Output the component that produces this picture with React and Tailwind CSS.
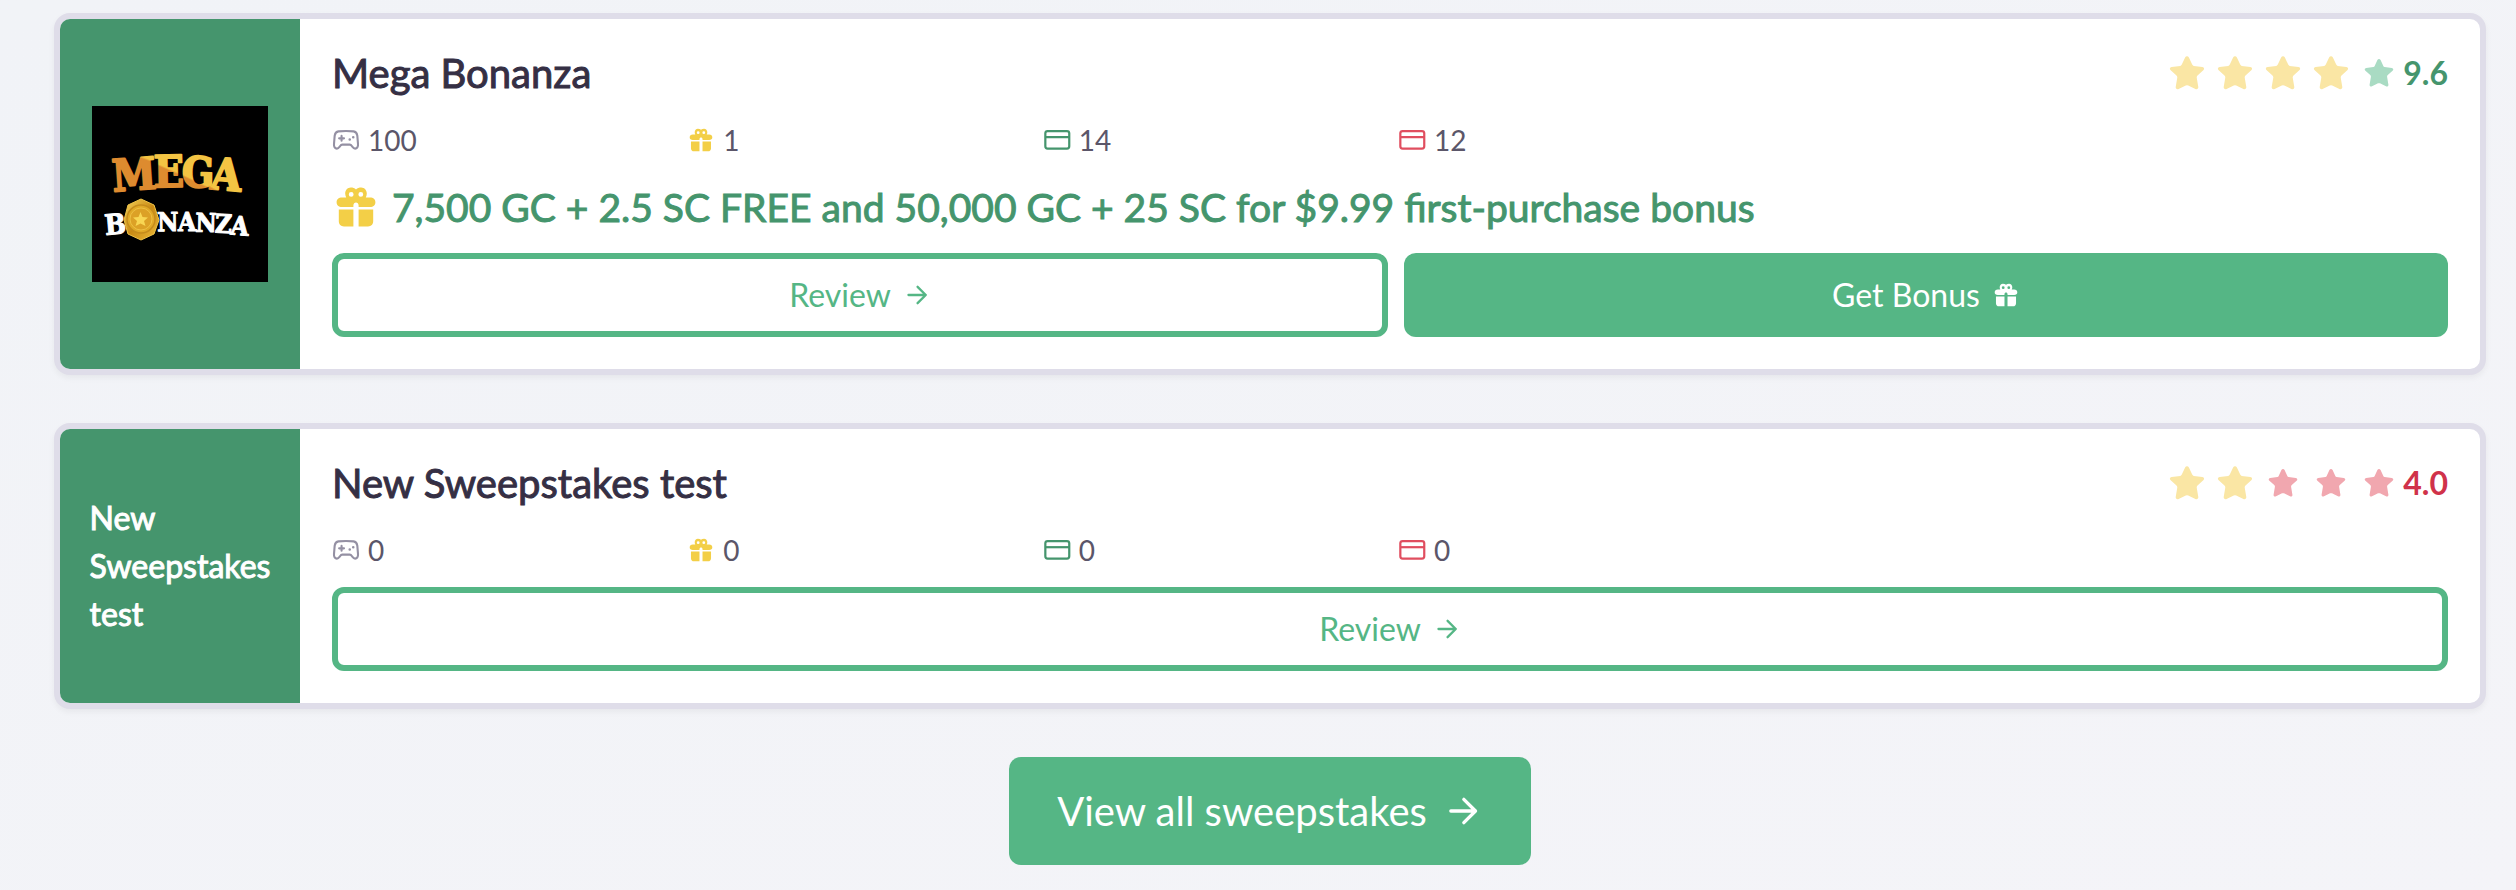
function Gift({ className }) {
  return (
    <svg viewBox="0 0 24 24" className={className} fill="currentColor" aria-hidden="true">
      <path
        fillRule="evenodd"
        d="M12 3.2C11.3 2.6 10.4 2.3 9.4 2.3C7.7 2.3 6.6 3.7 6.6 5.3C6.6 6 6.8 6.6 7.1 7.2H5C3.3 7.2 2.3 8.2 2.3 9.6C2.3 11 3.3 12 5 12H10.7V11.2C10.7 10.4 11.3 9.8 12 9.8C12.7 9.8 13.3 10.4 13.3 11.2V12H19C20.7 12 21.7 11 21.7 9.6C21.7 8.2 20.7 7.2 19 7.2H16.9C17.2 6.6 17.4 6 17.4 5.3C17.4 3.7 16.3 2.3 14.6 2.3C13.6 2.3 12.7 2.6 12 3.2ZM9.6 4.5A1.2 1.2 0 1 1 9.6 6.9A1.2 1.2 0 1 1 9.6 4.5ZM14.4 4.5A1.2 1.2 0 1 1 14.4 6.9A1.2 1.2 0 1 1 14.4 4.5Z"
      />
      <path d="M3.4 13.2H10.7V21.7H6C4.4 21.7 3.4 20.7 3.4 19ZM13.3 13.2H20.6V19C20.6 20.7 19.6 21.7 18 21.7H13.3Z" />
    </svg>
  );
}

function Gamepad({ className }) {
  return (
    <svg viewBox="0 0 24 24" className={className} fill="none" stroke="currentColor" strokeWidth="1.8" strokeLinecap="round" strokeLinejoin="round" aria-hidden="true">
      <path d="M5.5 4.6Q12 4 18.5 4.6C20.5 4.9 21.3 6 21.7 8.3L22.3 15.5C22.5 18 21.4 19.4 19.8 19.4C17.6 19.4 17.2 16 15.2 16H8.8C6.8 16 6.4 19.4 4.2 19.4C2.6 19.4 1.5 18 1.7 15.5L2.3 8.3C2.7 6 3.5 4.9 5.5 4.6Z" />
      <path d="M8.2 8.5V12.7M6.1 10.6H10.3" />
      <path d="M15.2 11.6H15.21M18.2 9.6H18.21" strokeWidth="2.2" />
    </svg>
  );
}

function Card({ className }) {
  return (
    <svg viewBox="0 0 24 24" className={className} fill="none" stroke="currentColor" strokeWidth="1.9" aria-hidden="true">
      <rect x="2" y="4.3" width="20.5" height="15" rx="2" />
      <path d="M2 9.6H22.5" />
    </svg>
  );
}

function Arrow({ className }) {
  return (
    <svg viewBox="0 0 24 24" className={className} fill="none" stroke="currentColor" strokeWidth="2" strokeLinecap="round" strokeLinejoin="round" aria-hidden="true">
      <path d="M4.7 12H19.5M12.5 5L19.5 12L12.5 19" />
    </svg>
  );
}

function Star({ className }) {
  return (
    <svg viewBox="0 0 36 36" className={className} fill="currentColor" aria-hidden="true">
      <path d="M16.1 2.4C16.9 0.8 19.1 0.8 19.9 2.4L23.2 9.6Q23.6 10.6 24.7 10.9L33.4 12C35.3 12.3 35.7 14 34.3 15.3L28.5 20.4Q27.6 21.3 27.7 22.6L29.3 32C29.5 33.7 28 34.7 26.4 34L19.2 30.4Q18 29.9 16.8 30.4L9.6 34C8 34.7 6.5 33.7 6.7 32L8.3 22.6Q8.4 21.3 7.5 20.4L1.7 15.3C0.3 14 0.7 12.3 2.6 12L11.3 10.9Q12.4 10.6 12.8 9.6Z" />
    </svg>
  );
}

function Rating({ filled, score, restClass, scoreClass }) {
  return (
    <div className="flex h-11 shrink-0 items-center" aria-label={`Rated ${score}`}>
      {[0, 1, 2, 3, 4].map((i) => (
        <span key={i} className="flex w-12 items-center justify-center">
          <Star className={i < filled ? "size-9 text-[#fae6a4]" : `size-[30px] ${restClass}`} />
        </span>
      ))}
      <span className={`text-[32px] leading-[44px] font-bold ${scoreClass}`}>{score}</span>
    </div>
  );
}

const MEGA = [
  ["M", 43, 84, -4, 44],
  ["E", 77, 81, -1, 44],
  ["G", 106, 81, 1, 42],
  ["A", 133, 84, 5, 44],
];

const BONANZA = [
  ["B", 24, 128, -5, 28],
  ["N", 76, 125, -1, 26],
  ["A", 95, 125, 0, 26],
  ["N", 114, 126, 1, 26],
  ["Z", 131, 127, 3, 26],
  ["A", 147, 129, 5, 26],
];

function Logo() {
  return (
    <svg viewBox="0 0 176 176" className="size-44" role="img" aria-label="Mega Bonanza">
      <defs>
        <linearGradient id="gold" gradientUnits="userSpaceOnUse" x1="90" y1="46" x2="70" y2="90">
          <stop offset="0.42" stopColor="#f3c443" />
          <stop offset="0.46" stopColor="#dd8b2f" />
        </linearGradient>
        <linearGradient id="coin" x1="0" y1="0" x2="1" y2="1">
          <stop offset="0" stopColor="#f6d35a" />
          <stop offset="0.5" stopColor="#c98a14" />
          <stop offset="1" stopColor="#eebd3b" />
        </linearGradient>
      </defs>
      <rect width="176" height="176" fill="#000" />
      <g fontFamily="'DejaVu Serif Condensed', 'DejaVu Serif', serif" fontWeight="700" textAnchor="middle" strokeLinejoin="round">
        {MEGA.map(([ch, x, y, r, size]) => (
          <text key={ch} x={x} y={y} fontSize={size} transform={`rotate(${r} ${x} ${y})`} fill="url(#gold)" stroke="url(#gold)" strokeWidth="2">
            {ch}
          </text>
        ))}
        {BONANZA.map(([ch, x, y, r, size]) => (
          <text key={x} x={x} y={y} fontSize={size} transform={`rotate(${r} ${x} ${y})`} fill="#fff" stroke="#fff" strokeWidth="1">
            {ch}
          </text>
        ))}
      </g>
      <path d="M49 93L62 99L67 114L62 128L49 134L36 128L32 114L36 99Z" fill="url(#coin)" stroke="#f0c548" strokeWidth="1" />
      <circle cx="49" cy="113" r="14" fill="#e0a927" stroke="#c58c1c" strokeWidth="1.5" />
      <circle cx="49" cy="113" r="11" fill="#dca126" stroke="#f1c64b" strokeWidth="0.8" />
      <path d="M48.5 106L50.5 111L56 111.5L52 115L53.5 120L48.5 117.5L43.5 120L45 115L41 111.5L46.5 111Z" fill="#f8d653" />
    </svg>
  );
}

const STATS = [
  [Gamepad, "text-[#9490a3]", "Games"],
  [Gift, "text-[#f3cf47]", "Bonuses"],
  [Card, "text-[#45956d]", "Deposit methods"],
  [Card, "text-[#e04e5f]", "Withdrawal methods"],
];

function ReviewLink() {
  return (
    <a href="#review" className="flex flex-1 items-center justify-center gap-3 rounded-xl border-6 border-[#55b685] px-6 py-3 text-[32px] leading-[48px] text-[#55b685]">
      Review
      <Arrow className="size-7" />
    </a>
  );
}

function Casino({ name, brand, stats, bonus, rating }) {
  return (
    <article className="flex overflow-hidden rounded-2xl border-6 border-[#dfdde9] bg-white shadow-[0_3px_6px_rgba(0,0,0,0.05)]">
      <div className="flex w-60 shrink-0 items-center justify-center bg-[#45956d]">{brand}</div>
      <div className="min-w-0 flex-1 p-8">
        <div className="mb-6 flex items-center justify-between">
          <h2 className="text-[40px] leading-[44px] text-[#352f44] [-webkit-text-stroke:1px_currentColor]">{name}</h2>
          <Rating {...rating} />
        </div>
        <ul className="mb-4 grid grid-cols-6 gap-4">
          {STATS.map(([Icon, color, label], i) => (
            <li key={label} className="flex items-center gap-2 text-[28px] leading-[42px] text-[#5b5669]" aria-label={label}>
              <Icon className={`size-7 ${color}`} />
              {stats[i]}
            </li>
          ))}
        </ul>
        {bonus && (
          <p className="mb-4 flex items-center gap-3 text-[39px] leading-[60px] text-[#45956d] [-webkit-text-stroke:1px_currentColor]">
            <Gift className="size-12 shrink-0 text-[#f3cf47]" />
            {bonus}
          </p>
        )}
        <div className="flex gap-4">
          <ReviewLink />
          {bonus && (
            <a href="#bonus" className="flex flex-1 items-center justify-center gap-3 rounded-xl bg-[#55b685] px-6 py-3 text-[32px] leading-[48px] text-white">
              Get Bonus
              <Gift className="size-7" />
            </a>
          )}
        </div>
      </div>
    </article>
  );
}

export default function App() {
  return (
    <main className="flex min-h-screen flex-col gap-12 bg-linear-to-br from-[#f1f3f7] to-[#f4f4f8] pt-[13px] pr-[30px] pb-6 pl-[54px] font-['Lato',sans-serif]">
      <Casino
        name="Mega Bonanza"
        brand={<Logo />}
        stats={[100, 1, 14, 12]}
        bonus="7,500 GC + 2.5 SC FREE and 50,000 GC + 25 SC for $9.99 first-purchase bonus"
        rating={{ filled: 4, score: "9.6", restClass: "text-[#a9dbc3]", scoreClass: "text-[#45956d]" }}
      />
      <Casino
        name="New Sweepstakes test"
        brand={
          <span className="w-min text-[32px] leading-[48px] text-white [-webkit-text-stroke:1px_currentColor]">
            New Sweepstakes test
          </span>
        }
        stats={[0, 0, 0, 0]}
        rating={{ filled: 2, score: "4.0", restClass: "text-[#f1a7af]", scoreClass: "text-[#d0324a]" }}
      />
      <a href="#all" className="flex items-center gap-4 self-center rounded-xl bg-[#55b685] px-12 py-6 text-[40px] leading-[60px] text-white">
        View all sweepstakes
        <Arrow className="size-10" />
      </a>
    </main>
  );
}
